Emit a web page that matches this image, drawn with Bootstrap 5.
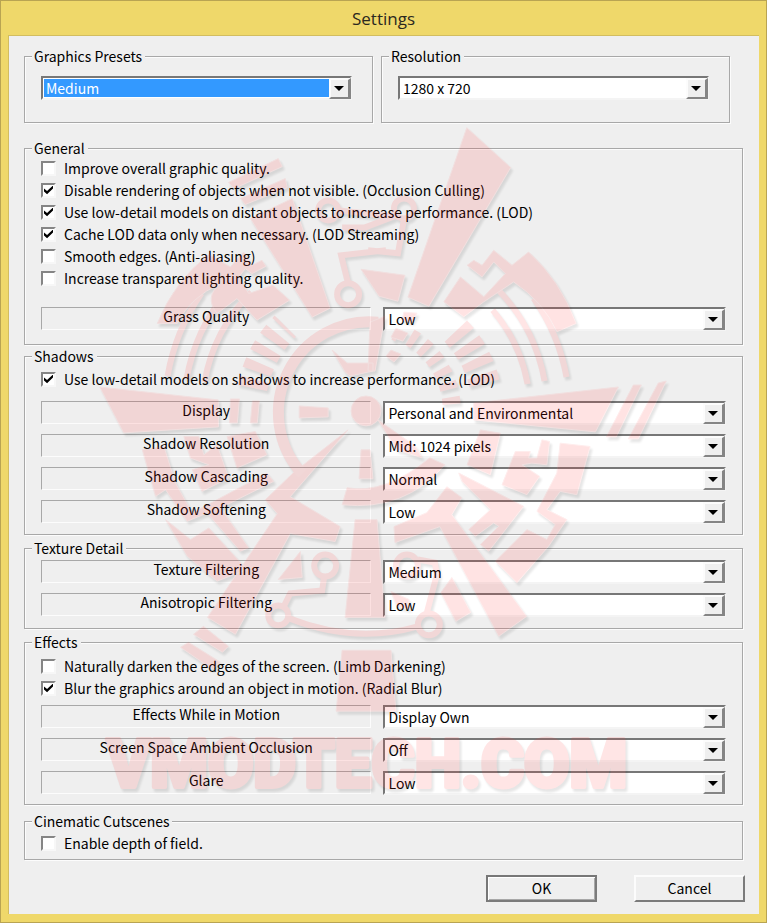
<!DOCTYPE html>
<html lang="en">
<head>
<meta charset="utf-8">
<meta name="viewport" content="width=device-width, initial-scale=1">
<title>Settings</title>
<link href="https://cdn.jsdelivr.net/npm/bootstrap@5.3.0/dist/css/bootstrap.min.css" rel="stylesheet">
<style>
  body { background: #efd86a; color: #000; font: 14px/17px "Noto Sans CJK JP", "Noto Sans", sans-serif; }
  .window { min-height: 100vh; border: 1px solid #b9a452; padding: 0 7px 7px; background: #efd86a; }
  .title-bar { height: 34px; font: 17px/36px "Open Sans", "Noto Sans", sans-serif; color: #2b2820; }
  .title-bar h1 { font: inherit; margin: 0; }
  .client { background: #efefef; border: 1px solid #d2bd60; border-right: 0; border-bottom: 0; padding: 12px 16px 12px 15px; }
  .presets { display: grid; grid-template-columns: 1fr 1fr; gap: 8px; padding-right: 13px; margin-bottom: 17px; }
  .group { border: 1px solid #a8a8a8; box-shadow: 1px 1px 0 #fcfcfc, inset 1px 1px 0 #fcfcfc; padding: 0 16px; }
  .group legend { float: none; width: auto; margin: 0 0 0 -9px; padding: 0 3px 0 2px; font-size: 14px; line-height: 17px; background: #efefef; }
  .g-preset { padding: 11px 20px 22px 16px; }
  .g-general { padding-bottom: 13px; margin-bottom: 3px; }
  .g-shadows { padding-top: 3px; padding-bottom: 10px; margin-bottom: 5px; }
  .g-texture { padding-top: 3px; padding-bottom: 11px; margin-bottom: 5px; }
  .g-effects { padding-top: 4px; padding-bottom: 9px; margin-bottom: 8px; }
  .g-cinema { padding-top: 2px; padding-bottom: 5px; margin-bottom: 15px; }
  .check-row { height: 22px; display: flex; align-items: center; gap: 8px; }
  .tick { appearance: none; flex: none; width: 15px; height: 15px; margin: 0; background: #fff; border: 2px solid; border-color: #858585 #f7f7f7 #f7f7f7 #858585; display: grid; place-items: center; }
  .tick:checked::before { content: ""; width: 9px; height: 9px; background: #000; clip-path: polygon(0 33%, 34% 60%, 100% 0, 100% 34%, 34% 98%, 0 68%); }
  .settings-rows { display: grid; gap: 9px; }
  .after-checks { margin-top: 11px; }
  .g-general .after-checks { margin-top: 18px; }
  .g-effects .after-checks { margin-top: 6px; }
  .pair { display: grid; grid-template-columns: 330fr 342fr; gap: 12px; height: 24px; }
  .pair label { height: 23px; border: 1px solid; border-color: #a8a8a8 #fcfcfc #fcfcfc #a8a8a8; text-align: center; line-height: 17px; }
  .combo { position: relative; display: block; height: 24px; }
  .combo select { appearance: none; display: block; width: 100%; height: 24px; border: 2px solid; border-color: #777 #f4f4f4 #f4f4f4 #777; border-radius: 0; background: #fff; color: #000; padding: 0 24px 0 3px; font: inherit; line-height: 19px; outline: 0; }
  .combo .picked { color: #fff; background: linear-gradient(#39f, #39f) 1px 1px / calc(100% - 22px) calc(100% - 2px) no-repeat #fff; }
  .arrow { position: absolute; right: 1px; top: 2px; width: 22px; height: 21px; background: #efefef; border: 2px solid; border-color: #fcfcfc #858585 #858585 #fcfcfc; border-right-width: 3px; padding-right: 1px; display: grid; place-items: center; pointer-events: none; }
  .arrow::before { content: ""; border: 5px solid transparent; border-top-color: #000; border-bottom: 0; }
  .actions { gap: 37px; margin-right: -2px; }
  .push { width: 111px; height: 27px; padding: 0; background: #efefef; color: #000; font: inherit; line-height: 21px; border: 2px solid; border-color: #fcfcfc #7b7b7b #7b7b7b #fcfcfc; border-radius: 0; }
  .push-default { border-color: #777 #7b7b7b #7b7b7b #777; box-shadow: inset 1px 1px 0 #fff, inset -1px -1px 0 #a8a8a8; }
  .watermark { position: absolute; left: 0; top: 0; width: 100%; pointer-events: none; opacity: .12; }
  .watermark .art { fill: #ff2424; stroke: #ff7070; stroke-width: 1; stroke-linejoin: round; filter: drop-shadow(2px 3px 1px rgba(0,0,0,.8)); }
  .watermark .art * { vector-effect: non-scaling-stroke; }
  .watermark .line { fill: none; stroke: #ff3030; stroke-width: 6; stroke-linejoin: miter; }
  .watermark text { font: 900 66px Roboto, "Liberation Sans", sans-serif; fill: #ff3030; stroke: #ff3030; stroke-width: 4; }
</style>
</head>
<body>
<main class="window position-relative">
  <header class="title-bar text-center"><h1>Settings</h1></header>
  <form class="client">
    <div class="presets">
      <fieldset class="group g-preset"><legend><label for="preset">Graphics Presets</label></legend>
        <span class="combo"><select id="preset" class="picked"><option>Medium</option></select><span class="arrow"></span></span>
      </fieldset>
      <fieldset class="group g-preset"><legend><label for="res">Resolution</label></legend>
        <span class="combo"><select id="res"><option>1280 x 720</option></select><span class="arrow"></span></span>
      </fieldset>
    </div>

    <fieldset class="group g-general"><legend>General</legend>
      <div class="check-row"><input class="tick" type="checkbox" id="c1"><label for="c1">Improve overall graphic quality.</label></div>
      <div class="check-row"><input class="tick" type="checkbox" id="c2" checked><label for="c2">Disable rendering of objects when not visible. (Occlusion Culling)</label></div>
      <div class="check-row"><input class="tick" type="checkbox" id="c3" checked><label for="c3">Use low-detail models on distant objects to increase performance. (LOD)</label></div>
      <div class="check-row"><input class="tick" type="checkbox" id="c4" checked><label for="c4">Cache LOD data only when necessary. (LOD Streaming)</label></div>
      <div class="check-row"><input class="tick" type="checkbox" id="c5"><label for="c5">Smooth edges. (Anti-aliasing)</label></div>
      <div class="check-row"><input class="tick" type="checkbox" id="c6"><label for="c6">Increase transparent lighting quality.</label></div>
      <div class="settings-rows after-checks">
        <div class="pair"><label for="s1">Grass Quality</label><span class="combo"><select id="s1"><option>Low</option></select><span class="arrow"></span></span></div>
      </div>
    </fieldset>

    <fieldset class="group g-shadows"><legend>Shadows</legend>
      <div class="check-row"><input class="tick" type="checkbox" id="c7" checked><label for="c7">Use low-detail models on shadows to increase performance. (LOD)</label></div>
      <div class="settings-rows after-checks">
        <div class="pair"><label for="s2">Display</label><span class="combo"><select id="s2"><option>Personal and Environmental</option></select><span class="arrow"></span></span></div>
        <div class="pair"><label for="s3">Shadow Resolution</label><span class="combo"><select id="s3"><option>Mid: 1024 pixels</option></select><span class="arrow"></span></span></div>
        <div class="pair"><label for="s4">Shadow Cascading</label><span class="combo"><select id="s4"><option>Normal</option></select><span class="arrow"></span></span></div>
        <div class="pair"><label for="s5">Shadow Softening</label><span class="combo"><select id="s5"><option>Low</option></select><span class="arrow"></span></span></div>
      </div>
    </fieldset>

    <fieldset class="group g-texture"><legend>Texture Detail</legend>
      <div class="settings-rows">
        <div class="pair"><label for="s6">Texture Filtering</label><span class="combo"><select id="s6"><option>Medium</option></select><span class="arrow"></span></span></div>
        <div class="pair"><label for="s7">Anisotropic Filtering</label><span class="combo"><select id="s7"><option>Low</option></select><span class="arrow"></span></span></div>
      </div>
    </fieldset>

    <fieldset class="group g-effects"><legend>Effects</legend>
      <div class="check-row"><input class="tick" type="checkbox" id="c8"><label for="c8">Naturally darken the edges of the screen. (Limb Darkening)</label></div>
      <div class="check-row"><input class="tick" type="checkbox" id="c9" checked><label for="c9">Blur the graphics around an object in motion. (Radial Blur)</label></div>
      <div class="settings-rows after-checks">
        <div class="pair"><label for="s8">Effects While in Motion</label><span class="combo"><select id="s8"><option>Display Own</option></select><span class="arrow"></span></span></div>
        <div class="pair"><label for="s9">Screen Space Ambient Occlusion</label><span class="combo"><select id="s9"><option>Off</option></select><span class="arrow"></span></span></div>
        <div class="pair"><label for="s10">Glare</label><span class="combo"><select id="s10"><option>Low</option></select><span class="arrow"></span></span></div>
      </div>
    </fieldset>

    <fieldset class="group g-cinema"><legend>Cinematic Cutscenes</legend>
      <div class="check-row"><input class="tick" type="checkbox" id="c10"><label for="c10">Enable depth of field.</label></div>
    </fieldset>

    <div class="actions d-flex justify-content-end">
      <button type="submit" class="push push-default">OK</button>
      <button type="button" class="push">Cancel</button>
    </div>
  </form>

  <svg class="watermark" viewBox="0 0 767 923" aria-hidden="true">
    <g class="art">
      <!-- long rays -->
      <path d="M467 127L511 167L429 306L408 297ZM250 218L292 198L330 308L312 317ZM228 182L278 158L282 166L234 188ZM240 198L285 178L287 187L245 204Z"/>
      <path d="M99 387L218 400V427L123 433ZM474 403L619 387L596 432L474 420ZM634 385H642L617 437H607ZM659 383L667 381L639 439H629Z"/>
      <path d="M207 618L235 635L290 534L335 542L340 527L290 497L348 430L293 473L265 500L277 514Z"/>
      <path d="M394 527L427 513L447 487L462 498L452 515L527 617L499 637L440 527L395 543Z"/>
      <path d="M355 520H377L385 618H345ZM342 651H391L396 712H336ZM193 635L203 627L228 647L222 653ZM180 648L188 643L220 663L212 670Z"/>
      <!-- dial -->
      <circle cx="366" cy="411" r="15"/>
      <path class="line" style="stroke-width:11" d="M302 474A91 91 0 0 1 378 322"/>
      <path d="M299 406L328 408V417L299 418ZM361 450H370L373 479H359ZM347 488Q385 495 430 458L445 465Q405 512 342 505ZM378 420L415 446L422 458L397 450ZM332 350L347 363H373V371L350 376L345 372ZM370 322L385 316L375 371H368Z"/>
      <path class="line" style="stroke-width:12" stroke-dasharray="10 8" d="M394 334A82 82 0 0 1 398 336"/>
      <path class="line" style="stroke-width:18" stroke-dasharray="7 8" d="M410 337A86 86 0 0 1 452 412"/>
      <path d="M391 350L401 354L394 362L386 356ZM396 328L408 333L403 341L391 337ZM404 312L417 313L412 322L402 320Z"/>
      <path class="line" style="stroke-width:31" stroke-dasharray="9 8" d="M456 331A117 117 0 0 1 486 389"/>
      <path class="line" style="stroke-width:30" stroke-dasharray="9 8" d="M252 388A121 121 0 0 1 285 326"/>
      <path d="M230 399H239L237 423H229ZM252 401H259L257 423H250Z"/>
      <!-- outer bands -->
      <path class="line" d="M167 376A207 207 0 0 1 201 293M186 379A188 188 0 0 1 227 291M204 382A170 170 0 0 1 251 292M528 384A159 159 0 0 0 493 310M545 381A177 177 0 0 0 496 287M567 377A199 199 0 0 0 534 298"/>
      <path transform="translate(0 130) scale(.3333)" d="M470 580Q520 455 625 372L690 410L730 365L755 405L785 390L797 408L755 430L735 415L715 440L745 490L818 465L868 510L770 570L710 505L650 550Q610 500 660 460Q570 500 530 580Z"/>
      <path transform="translate(384 130) scale(.3333)" d="M330 360L385 405L435 365Q530 450 578 580L520 605Q480 515 390 455L300 515L240 560L180 515L230 440L300 500L365 430L330 395L295 440L250 405L270 390L295 405Z"/>
      <path transform="translate(0 340) scale(.3333)" d="M680 290L765 275L800 345L710 385ZM425 330L490 320L525 430L575 520L800 400L820 425L660 505L745 625L720 635L620 520L560 545L495 450L465 470ZM550 290H595L610 345L650 315L685 415L605 455L575 390L625 375L570 355ZM495 540L570 600L625 565L740 690L650 725L560 650Z"/>
      <path transform="translate(384 340) scale(.3333)" d="M290 270L350 280L320 405L250 375ZM475 300L498 305L490 375L445 370L415 375L468 410L430 465L355 435L395 335L440 335L435 355H460ZM530 310L620 320L580 465L530 455L490 510L550 540L495 620L400 730L335 665L430 570L490 600L515 555L460 515L520 400ZM225 400L420 500L315 635L290 615L345 560L330 550L275 590L255 570L320 510L235 425Z"/>
      <!-- circuit traces -->
      <g class="line">
        <circle cx="328" cy="210" r="10"/><circle cx="348" cy="294" r="11"/><circle cx="404" cy="208" r="10"/>
        <path d="M348 283L341 255L386 250M404 219L398 253L368 250M339 210L394 216L365 227H342"/>
        <circle cx="278" cy="616" r="10"/><circle cx="325" cy="566" r="11"/><circle cx="407" cy="566" r="11"/><circle cx="429" cy="625" r="11"/>
        <path d="M324 577L322 591L290 594L284 606M289 619Q355 645 418 627M418 560L435 563L437 575L427 613"/>
      </g>
      <path d="M300 552L302 578L278 580ZM452 578L471 613L456 622L441 593ZM391 592L409 600V610L397 607ZM361 269L405 275L398 301L379 296Z"/>
      <text x="106" y="788">VMODTECH.COM</text>
    </g>
  </svg>
</main>
<script src="https://cdn.jsdelivr.net/npm/bootstrap@5.3.0/dist/js/bootstrap.bundle.min.js"></script>
</body>
</html>
